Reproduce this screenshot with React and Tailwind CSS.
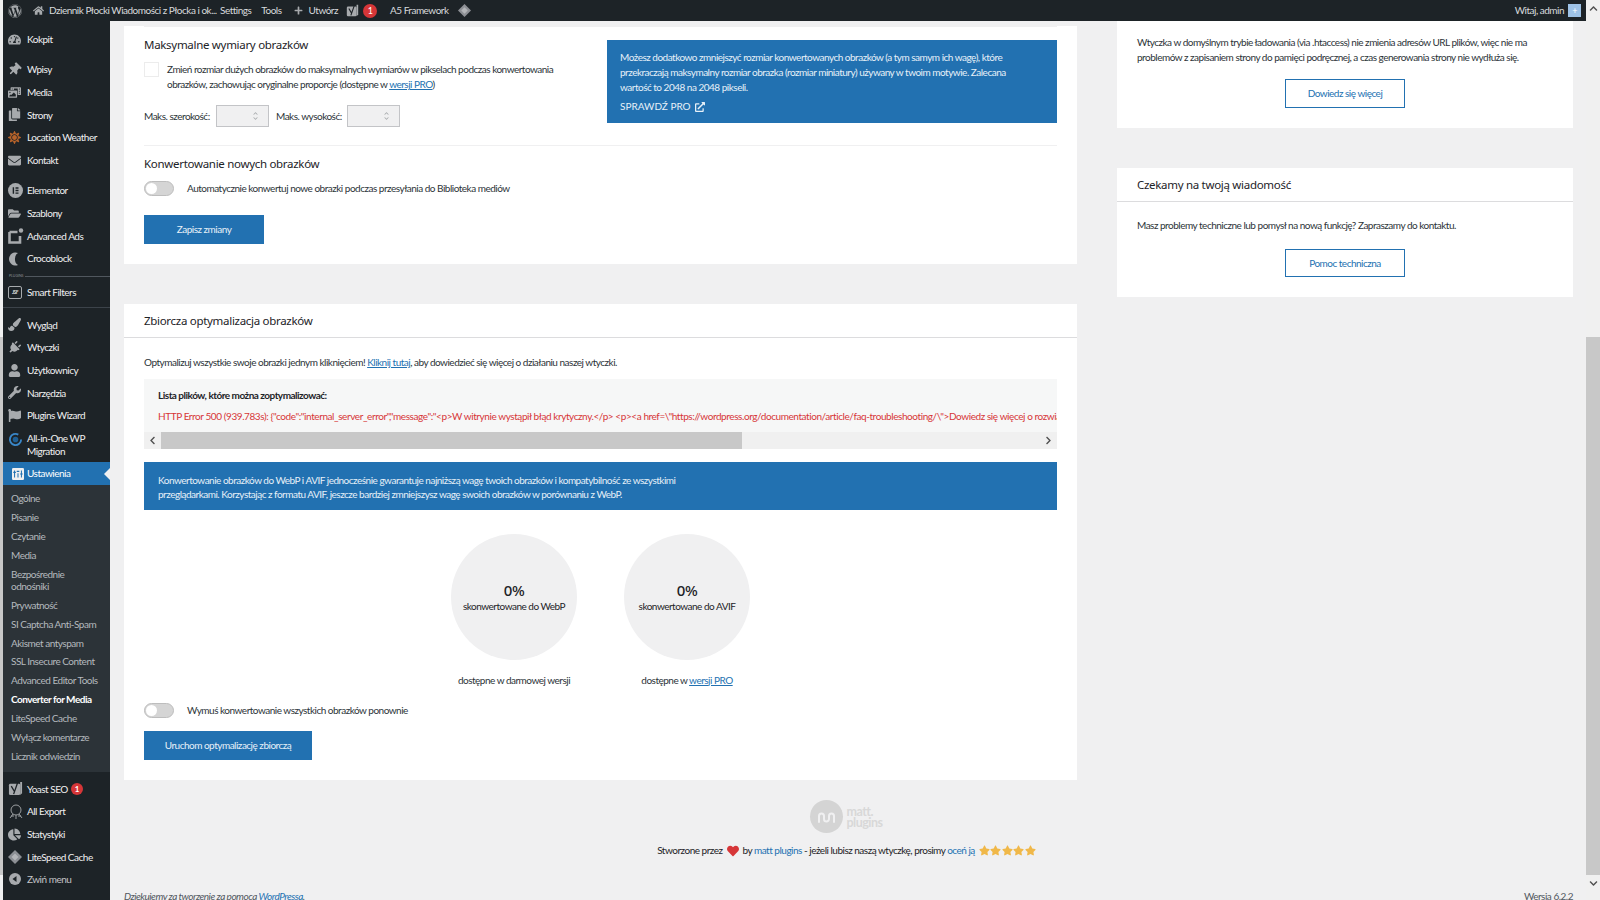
import React from 'react';
import {
  FaWordpress, FaHome, FaPlus, FaTachometerAlt, FaThumbtack, FaCopy, FaEnvelope, FaFolderOpen,
  FaPaintBrush, FaPlug, FaUser, FaWrench, FaFlag, FaChartPie, FaStar, FaHeart, FaPhotoVideo,
  FaChevronUp, FaChevronDown, FaChevronLeft, FaChevronRight, FaExternalLinkAlt, FaSun,
} from 'react-icons/fa';

const YoastIcon = ({ size = 15 }) => (
  <svg width={size} height={size} viewBox="0 0 16 16">
    <rect x="1" y="3" width="12" height="12" rx="1.500" fill="#a7aaad" />
    <path d="M3.500 5.500L7 11.500M10.500 1L6 14" stroke="#1d2327" strokeWidth="1.400" fill="none" />
    <path d="M13 1h2v12l-2 2z" fill="#a7aaad" />
  </svg>
);

const Diamond = ({ size = 14, color = '#8c8f94' }) => (
  <svg width={size} height={size} viewBox="0 0 16 16">
    <path d="M8 0l8 8-8 8-8-8z" fill={color} />
    <path d="M8 4l4 4-4 4-4-4z" fill="#c3c4c7" opacity="0.7" />
  </svg>
);

const ElementorIcon = () => (
  <svg width="15" height="15" viewBox="0 0 16 16">
    <circle cx="8" cy="8" r="8" fill="#a7aaad" />
    <path d="M5 4.500h1.500v7H5zM8 4.500h3.200V6H8zM8 7.300h3.200v1.400H8zM8 10h3.200v1.500H8z" fill="#1d2327" />
  </svg>
);

const AdsIcon = () => (
  <svg width="16" height="16" viewBox="0 0 16 16" fill="none">
    <path d="M1.500 4h8M1.500 4v10.500h10.500V8" stroke="#a7aaad" strokeWidth="2.600" />
    <circle cx="13" cy="2.500" r="2.200" fill="#a7aaad" />
  </svg>
);

const CrocoIcon = () => (
  <svg width="14" height="14" viewBox="0 0 14 14">
    <path d="M10 1A6.500 6.500 0 1 0 10 13A5 6.500 0 0 1 10 1z" fill="#a7aaad" />
  </svg>
);

const FiltersIcon = () => (
  <div className="w-[14px] h-[13px] border border-[#a7aaad] rounded-[2px] flex items-center justify-center text-[5px] leading-none text-[#dcdcde] font-bold">
    JSF
  </div>
);

const MigrationIcon = () => (
  <svg width="15" height="15" viewBox="0 0 16 16" fill="none">
    <path d="M14 8a6 6 0 1 1-3-5.200" stroke="#3a87c8" strokeWidth="2" />
    <circle cx="8" cy="8" r="3" fill="#1f5f94" />
  </svg>
);

const SettingsIcon = () => (
  <svg width="12" height="12" viewBox="0 0 14 14">
    <rect width="14" height="14" rx="1.500" fill="#f0f0f1" />
    <path d="M3 3v8M7 6v5M11 3v8" stroke="#2271b1" strokeWidth="1.200" />
    <path d="M1.500 5h3M5.500 4h3M9.500 7h3" stroke="#2271b1" strokeWidth="1.400" />
  </svg>
);

const ExportIcon = () => (
  <svg width="16" height="16" viewBox="0 0 16 16" fill="none" stroke="#a7aaad" strokeWidth="0.900">
    <circle cx="8" cy="6" r="5" />
    <path d="M5 10l-3 4M11 10l3 4M8 11v4M3 12h3M10 12h3" />
  </svg>
);

const CollapseIcon = () => (
  <svg width="12" height="12" viewBox="0 0 12 12">
    <circle cx="6" cy="6" r="6" fill="#a7aaad" />
    <path d="M7.500 3v6L3.500 6z" fill="#1d2327" />
  </svg>
);

const ico = (Icon, size = 13, className = '') => <Icon size={size} color="#a7aaad" className={className} />;

const SideItem = ({ icon, label, badge, className = '' }) => (
  <div className={`h-[22.7px] flex items-center ${className}`}>
    <span className="w-[24px] pl-[5px] shrink-0 flex items-center">{icon}</span>
    <span className="text-[#f0f0f1] whitespace-nowrap">{label}</span>
    {badge && (
      <span className="ml-[3px] w-[12px] h-[12px] rounded-full bg-[#d63638] text-white text-[8px] font-bold flex items-center justify-center">
        1
      </span>
    )}
  </div>
);

const SubItem = ({ label, active }) => (
  <div className={`h-[18.9px] flex items-center pl-[8px] whitespace-nowrap ${active ? 'text-white font-bold' : 'text-[#b4b9be]'}`}>
    {label}
  </div>
);

const Sidebar = () => (
  <aside className="w-[107px] shrink-0 bg-[#1d2327] leading-[12.5px] flex flex-col">
    <SideItem className="mt-[7px]" icon={ico(FaTachometerAlt)} label="Kokpit" />
    <SideItem className="mt-[7.5px]" icon={ico(FaThumbtack, 13, 'rotate-45')} label="Wpisy" />
    <SideItem icon={ico(FaPhotoVideo)} label="Media" />
    <SideItem icon={ico(FaCopy)} label="Strony" />
    <SideItem icon={<FaSun size={13} color="#b5622a" />} label="Location Weather" />
    <SideItem icon={ico(FaEnvelope)} label="Kontakt" />
    <SideItem className="mt-[7.5px]" icon={<ElementorIcon />} label="Elementor" />
    <SideItem icon={ico(FaFolderOpen)} label="Szablony" />
    <SideItem icon={<AdsIcon />} label="Advanced Ads" />
    <SideItem icon={<CrocoIcon />} label="Crocoblock" />
    <div className="mt-[5px] h-[3px] flex items-center pl-[6px]">
      <span className="text-[3.500px] text-[#8c8f94] tracking-normal">PLUGINS</span>
      <span className="flex-1 h-px bg-[#50575e] ml-px" />
    </div>
    <SideItem className="mt-[3px]" icon={<FiltersIcon />} label="Smart Filters" />
    <div className="mt-[3px] h-px bg-[#3c434a]" />
    <SideItem className="mt-[6px]" icon={ico(FaPaintBrush)} label="Wygląd" />
    <SideItem icon={ico(FaPlug, 13, 'rotate-45')} label="Wtyczki" />
    <SideItem icon={ico(FaUser)} label="Użytkownicy" />
    <SideItem icon={ico(FaWrench)} label="Narzędzia" />
    <SideItem icon={ico(FaFlag)} label="Plugins Wizard" />
    <div className="h-[35px] flex pt-[5px]">
      <span className="w-[24px] pl-[5px] shrink-0"><MigrationIcon /></span>
      <span className="text-[#f0f0f1]">All-in-One WP<br />Migration</span>
    </div>
    <div className="relative h-[23px] bg-[#2271b1] flex items-center">
      <span className="w-[24px] pl-[9px] shrink-0 flex"><SettingsIcon /></span>
      <span className="text-white">Ustawienia</span>
      <span className="absolute right-0 top-[6px] border-y-[6px] border-y-transparent border-r-[6px] border-r-[#f0f0f1]" />
    </div>
    <div className="bg-[#2c3338] pt-[4px] pb-[6px]">
      <SubItem label="Ogólne" />
      <SubItem label="Pisanie" />
      <SubItem label="Czytanie" />
      <SubItem label="Media" />
      <div className="h-[31px] flex items-center pl-[8px] text-[#b4b9be]">Bezpośrednie<br />odnośniki</div>
      <SubItem label="Prywatność" />
      <SubItem label="SI Captcha Anti-Spam" />
      <SubItem label="Akismet antyspam" />
      <SubItem label="SSL Insecure Content" />
      <SubItem label="Advanced Editor Tools" />
      <SubItem label="Converter for Media" active />
      <SubItem label="LiteSpeed Cache" />
      <SubItem label="Wyłącz komentarze" />
      <SubItem label="Licznik odwiedzin" />
    </div>
    <SideItem className="mt-[6px]" icon={<YoastIcon />} label="Yoast SEO" badge />
    <SideItem icon={<ExportIcon />} label="All Export" />
    <SideItem icon={ico(FaChartPie)} label="Statystyki" />
    <SideItem icon={<Diamond size={14} />} label="LiteSpeed Cache" />
    <div className="h-[22px] flex items-center text-[#c3c4c7]">
      <span className="w-[24px] pl-[6px] shrink-0 flex"><CollapseIcon /></span>
      Zwiń menu
    </div>
  </aside>
);

const AdminBar = () => (
  <header className="h-[21px] shrink-0 bg-[#1d2327] text-[#d8dadc] flex items-center">
    <FaWordpress size={14} color="#a7aaad" className="ml-[5px]" />
    <FaHome size={11} color="#a7aaad" className="ml-[11px]" />
    <span className="ml-[5px] w-[162px] whitespace-nowrap">Dziennik Płocki Wiadomości z Płocka i ok...</span>
    <span className="ml-[9px]">Settings</span>
    <span className="ml-[10px]">Tools</span>
    <FaPlus size={9} color="#a7aaad" className="ml-[12px]" />
    <span className="ml-[6px]">Utwórz</span>
    <span className="ml-[8px] flex"><YoastIcon size={13} /></span>
    <span className="ml-[4px] w-[14px] h-[14px] rounded-full bg-[#d63638] text-white text-[9px] flex items-center justify-center">1</span>
    <span className="ml-[13px]">A5 Framework</span>
    <span className="ml-[9px] flex"><Diamond size={13} /></span>
    <span className="ml-auto">Witaj, admin</span>
    <span className="ml-[4px] mr-[5px] w-[13px] h-[13px] bg-[#9ec2e6] flex items-center justify-center text-white text-[9px]">+</span>
  </header>
);

const Toggle = () => (
  <span className="block w-[30px] h-[15px] shrink-0 rounded-full bg-[#d5d5d5] border border-[#bdbdbd] p-px">
    <span className="block w-[11px] h-[11px] rounded-full bg-white" />
  </span>
);

const NumberBox = () => (
  <div className="w-[53px] h-[22px] bg-[#f0f0f1] border border-[#c3c4c7] flex items-center justify-end pr-[10px] text-[#a7aaad]">
    <span className="flex flex-col">
      <FaChevronUp size={5} />
      <FaChevronDown size={5} />
    </span>
  </div>
);

const PrimaryButton = ({ children, className = '' }) => (
  <div className={`h-[29px] bg-[#2271b1] text-[#e6f0f8] flex items-center justify-center ${className}`}>{children}</div>
);

const OutlineButton = ({ children, className = '' }) => (
  <div className={`w-[120px] h-[29px] mx-auto border border-[#2271b1] text-[#2271b1] flex items-center justify-center ${className}`}>{children}</div>
);

const Heading = ({ children, className = '' }) => (
  <h3 className={`font-['Noto_Sans',sans-serif] text-[11.5px] leading-[16px] tracking-[-0.3px] text-[#1d2327] ${className}`}>{children}</h3>
);

const A = ({ children }) => <span className="text-[#2271b1] underline">{children}</span>;

const StatCircle = ({ label, children }) => (
  <div className="w-[126px] flex flex-col items-center">
    <div className="w-[126px] h-[126px] rounded-full bg-[#f0f0f1] flex flex-col items-center pt-[46px]">
      <span className="font-['Noto_Sans',sans-serif] text-[15px] leading-[20px] font-medium text-[#1d2327]">0%</span>
      <span className="mt-[1px] leading-[11px] whitespace-nowrap text-[#1d2327]">{label}</span>
    </div>
    <div className="mt-[12.5px] leading-[15px] whitespace-nowrap">{children}</div>
  </div>
);

const SettingsCard = () => (
  <section className="bg-white pb-[20px] px-[20px]">
    <div className="mt-[5px] pt-[5px] border-t border-[#f0f0f1]" />
    <div className="flex h-[109px]">
      <div className="w-[463px] shrink-0 pt-[5px]">
        <Heading>Maksymalne wymiary obrazków</Heading>
        <div className="mt-[9px] flex">
          <span className="w-[15px] h-[15px] shrink-0 border border-[#ececec] bg-white" />
          <p className="ml-[8px] leading-[15px] whitespace-nowrap">
            Zmień rozmiar dużych obrazków do maksymalnych wymiarów w pikselach podczas konwertowania<br />
            obrazków, zachowując oryginalne proporcje (dostępne w <A>wersji PRO</A>)
          </p>
        </div>
        <div className="mt-[13px] flex items-center whitespace-nowrap">
          <span className="w-[72px]">Maks. szerokość:</span>
          <NumberBox />
          <span className="ml-[7px] w-[71px]">Maks. wysokość:</span>
          <NumberBox />
        </div>
      </div>
      <div className="w-[450px] h-[83px] mt-[8px] bg-[#2271b1] text-[#e6f0f8] px-[13px] pt-[10px] leading-[15px] whitespace-nowrap">
        <p>
          Możesz dodatkowo zmniejszyć rozmiar konwertowanych obrazków (a tym samym ich wagę), które<br />
          przekraczają maksymalny rozmiar obrazka (rozmiar miniatury) używany w twoim motywie. Zalecana<br />
          wartość to 2048 na 2048 pikseli.
        </p>
        <div className="mt-[4px] flex items-center gap-[4px] tracking-normal">
          SPRAWDŹ PRO <FaExternalLinkAlt size={10} />
        </div>
      </div>
    </div>
    <div className="mt-[4px] border-t border-[#f0f0f1]" />
    <Heading className="mt-[10px]">Konwertowanie nowych obrazków</Heading>
    <div className="mt-[9px] flex items-center">
      <Toggle />
      <span className="ml-[13px]">Automatycznie konwertuj nowe obrazki podczas przesyłania do Biblioteka mediów</span>
    </div>
    <PrimaryButton className="mt-[19px] w-[120px]">Zapisz zmiany</PrimaryButton>
  </section>
);

const ErrorLog = () => (
  <div className="mt-[9px] bg-[#f6f7f7]">
    <div className="px-[14px] pt-[9px] leading-[15px] font-bold text-[#1d2327]">Lista plików, które można zoptymalizować:</div>
    <div className="mt-[6px] pl-[14px] leading-[15px] tracking-[-0.42px] text-[#d63638] whitespace-nowrap overflow-hidden">
      {'HTTP Error 500 (939.783s): {"code":"internal_server_error","message":"<p>W witrynie wystąpił błąd krytyczny.</p> <p><a href=\\"https://wordpress.org/documentation/article/faq-troubleshooting/\\">Dowiedz się więcej o rozwiązywaniu problemów'}
    </div>
    <div className="mt-[8px] h-[17px] flex bg-[#f0f0f0] text-[#505050]">
      <span className="w-[17px] flex items-center justify-center"><FaChevronLeft size={9} /></span>
      <span className="w-[581px] bg-[#c8c8c8]" />
      <span className="ml-auto w-[17px] flex items-center justify-center"><FaChevronRight size={9} /></span>
    </div>
  </div>
);

const BulkCard = () => (
  <section className="mt-[40px] bg-white">
    <div className="h-[34px] px-[20px] pt-[9px] border-b border-[#dcdcde]">
      <Heading>Zbiorcza optymalizacja obrazków</Heading>
    </div>
    <div className="px-[20px] pb-[20px]">
      <p className="mt-[17px] leading-[15px]">
        Optymalizuj wszystkie swoje obrazki jednym kliknięciem! <A>Kliknij tutaj</A>, aby dowiedzieć się więcej o działaniu naszej wtyczki.
      </p>
      <ErrorLog />
      <div className="mt-[13px] h-[48px] bg-[#2271b1] text-[#e6f0f8] px-[14px] pt-[11px] leading-[14px]">
        Konwertowanie obrazków do WebP i AVIF jednocześnie gwarantuje najniższą wagę twoich obrazków i kompatybilność ze wszystkimi<br />
        przeglądarkami. Korzystając z formatu AVIF, jeszcze bardziej zmniejszysz wagę swoich obrazków w porównaniu z WebP.
      </div>
      <div className="mt-[24px] ml-[307px] flex gap-[47px]">
        <StatCircle label="skonwertowane do WebP">dostępne w darmowej wersji</StatCircle>
        <StatCircle label="skonwertowane do AVIF">dostępne w <A>wersji PRO</A></StatCircle>
      </div>
      <div className="mt-[15.5px] flex items-center">
        <Toggle />
        <span className="ml-[13px]">Wymuś konwertowanie wszystkich obrazków ponownie</span>
      </div>
      <PrimaryButton className="mt-[13px] w-[168px]">Uruchom optymalizację zbiorczą</PrimaryButton>
    </div>
  </section>
);

const RightColumn = () => (
  <div className="w-[456px] shrink-0">
    <section className="bg-white px-[20px] pb-[20px]">
      <p className="pt-[14px] leading-[15px] whitespace-nowrap">
        Wtyczka w domyślnym trybie ładowania (via .htaccess) nie zmienia adresów URL plików, więc nie ma<br />
        problemów z zapisaniem strony do pamięci podręcznej, a czas generowania strony nie wydłuża się.
      </p>
      <OutlineButton className="mt-[14px]">Dowiedz się więcej</OutlineButton>
    </section>
    <section className="mt-[40px] bg-white pb-[20px]">
      <div className="h-[34px] px-[20px] pt-[9px] border-b border-[#dcdcde]">
        <Heading>Czekamy na twoją wiadomość</Heading>
      </div>
      <p className="mx-[20px] mt-[16px] leading-[15px]">Masz problemy techniczne lub pomysł na nową funkcję? Zapraszamy do kontaktu.</p>
      <OutlineButton className="mt-[16px] !h-[28px]">Pomoc techniczna</OutlineButton>
    </section>
  </div>
);

const PluginFooter = () => (
  <div className="pr-[17px] flex flex-col items-center">
    <div className="mt-[20px] h-[33px] flex items-center">
      <span className="w-[33px] h-[33px] rounded-full bg-[#d4d4d4] flex items-center justify-center">
        <svg width="22" height="14" viewBox="0 0 22 14" fill="none" stroke="#f0f0f1" strokeWidth="2" strokeLinecap="round">
          <path d="M3 12V6a2.500 2.500 0 0 1 5 0v3a2.500 2.500 0 0 0 5 0V6a2.500 2.500 0 0 1 5 0v6" />
        </svg>
      </span>
      <span className="ml-[3px] text-[12.5px] leading-[11px] font-bold text-[#d8d8d8]">matt.<br />plugins</span>
    </div>
    <div className="mt-[10px] h-[15px] flex items-center whitespace-nowrap text-[#1d2327]">
      Stworzone przez
      <FaHeart size={12} color="#d63638" className="mx-[4px]" />
      by&nbsp;<span className="text-[#2271b1]">matt plugins</span>&nbsp;- jeżeli lubisz naszą wtyczkę, prosimy&nbsp;<span className="text-[#2271b1]">oceń ją</span>
      <span className="ml-[4px] flex gap-[0.5px]">
        {[0, 1, 2, 3, 4].map((i) => <FaStar key={i} size={11} color="#f0b849" />)}
      </span>
    </div>
  </div>
);

const App = () => (
  <div className="w-[1600px] h-[900px] overflow-hidden flex bg-[#f0f0f1] font-['Lato',sans-serif] text-[10px] tracking-[-0.5px] text-[#2c3338]">
    <div className="w-[3px] shrink-0 flex flex-col">
      <div className="h-[337px] bg-[#f0f0f0]" />
      <div className="h-[538px] bg-[#c8c8c8]" />
    </div>
    <div className="w-[1583px] shrink-0 flex flex-col">
      <AdminBar />
      <div className="flex flex-1 min-h-0">
        <Sidebar />
        <main className="flex-1 min-w-0 pl-[14px] flex flex-col">
          <div className="flex gap-[40px]">
            <div className="w-[953px] shrink-0">
              <SettingsCard />
              <BulkCard />
            </div>
            <RightColumn />
          </div>
          <PluginFooter />
          <div className="mt-[31px] pr-[13px] flex justify-between text-[#50575e]">
            <span className="italic">Dziękujemy za tworzenie za pomocą <span className="text-[#2271b1] underline">WordPressa</span>.</span>
            <span>Wersja 6.2.2</span>
          </div>
        </main>
      </div>
    </div>
    <div className="w-[14px] shrink-0 bg-[#f0f0f0] flex flex-col items-center text-[#505050]">
      <div className="h-[17px] flex items-center"><FaChevronUp size={9} /></div>
      <div className="mt-[320px] h-[538px] w-full bg-[#c8c8c8]" />
      <div className="h-[17px] flex items-center"><FaChevronDown size={9} /></div>
    </div>
  </div>
);

export default App;
